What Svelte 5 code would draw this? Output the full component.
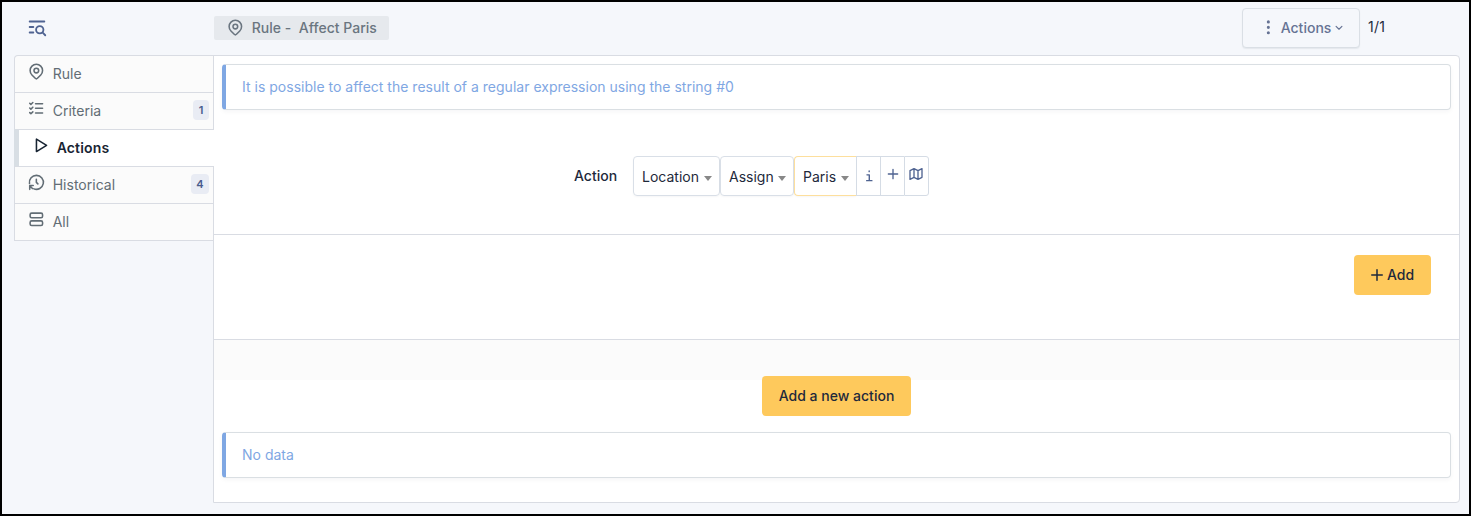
<script>
  const tabs = [
    { label: 'Rule', icon: 'pin' },
    { label: 'Criteria', icon: 'checks', count: 1 },
    { label: 'Actions', icon: 'play', active: true },
    { label: 'Historical', icon: 'history', count: 4 },
    { label: 'All', icon: 'rows' }
  ];
  const selects = [
    { label: 'Location', width: 87 },
    { label: 'Assign', width: 74 },
    { label: 'Paris', width: 62, required: true }
  ];
</script>

{#snippet icon(name, size)}
  <svg class="icon" width={size} height={size} viewBox="0 0 24 24">
    {#if name === 'pin'}
      <circle cx="12" cy="11" r="3" />
      <path d="M17.657 16.657L13.414 20.9a2 2 0 0 1-2.827 0l-4.244-4.243a8 8 0 1 1 11.314 0z" />
    {:else if name === 'checks'}
      <path d="M3.5 5.5L5 7l2.500-2.500M3.500 11.500L5 13l2.500-2.500M3.500 17.500L5 19l2.500-2.500M11 6h9M11 12h9M11 18h9" />
    {:else if name === 'play'}
      <path d="M7 4v16l13-8z" />
    {:else if name === 'history'}
      <path d="M12 8v4l2 2" />
      <path d="M3.200 13.500a9 9 0 1 1 5.600 6.900M8 16H3.500v5M3.500 16.500L7 20" />
    {:else if name === 'rows'}
      <rect x="4" y="4" width="16" height="6" rx="2" />
      <rect x="4" y="14" width="16" height="6" rx="2" />
    {:else if name === 'search'}
      <circle cx="15" cy="15" r="4" />
      <path d="M18.500 18.500L21 21M4 6h16M4 12h4M4 18h4" />
    {:else if name === 'dots'}
      <circle cx="12" cy="5" r="1" />
      <circle cx="12" cy="12" r="1" />
      <circle cx="12" cy="19" r="1" />
    {:else if name === 'chevron'}
      <path d="M5 8l7 7 7-7" stroke-width="2.800" />
    {:else if name === 'plus'}
      <path d="M12 5v14M5 12h14" />
    {:else if name === 'map'}
      <path d="M3 7l6-3 6 3 6-3v13l-6 3-6-3-6 3zM9 4v13M15 7v13" />
    {:else if name === 'info'}
      <path d="M8.500 10h4v10M8 20h9M12.300 3.500v1" stroke-width="2.400" />
    {/if}
  </svg>
{/snippet}

<div class="page">
  <header>
    <span class="filter">{@render icon('search', 22)}</span>
    <h1>{@render icon('pin', 18.7)}<span>Rule -&nbsp; Affect Paris</span></h1>
    <button class="menu">
      {@render icon('dots', 18.7)}<span>Actions</span>{@render icon('chevron', 10)}
    </button>
    <span class="pager">1/1</span>
  </header>

  <main>
    <nav>
      {#each tabs as tab}
        <a class:active={tab.active}>
          {@render icon(tab.icon, 18.7)}
          <span class="label">{tab.label}</span>
          {#if tab.count}<span class="badge">{tab.count}</span>{/if}
        </a>
      {/each}
    </nav>

    <section>
      <div class="alert">It is possible to affect the result of a regular expression using the string #0</div>
      <div class="fields">
        <span class="name">Action</span>
        {#each selects as s}
          <div class="select" class:required={s.required} style="width: {s.width}px">
            <span>{s.label}</span><i></i>
          </div>
        {/each}
        <div class="tool info">{@render icon('info', 14)}</div>
        <div class="tool">{@render icon('plus', 16)}</div>
        <div class="tool">{@render icon('map', 16)}</div>
      </div>
      <div class="submit">
        <button class="primary add">{@render icon('plus', 18)}<span>Add</span></button>
      </div>
      <div class="band"></div>
      <button class="primary new">Add a new action</button>
      <div class="alert">No data</div>
    </section>
  </main>
</div>

<style>
  .page {
    box-sizing: border-box;
    width: 1471px;
    height: 516px;
    border: 2px solid #000;
    background: #f5f7fb;
    font: 14px/20px Inter, sans-serif;
    letter-spacing: 0.01px;
    color: #1e293b;
    overflow: hidden;
  }
  .page :is(div, section, nav, a, button, h1, header, main) { box-sizing: border-box; }
  .icon {
    display: block;
    flex: none;
    fill: none;
    stroke: currentColor;
    stroke-width: 2;
    stroke-linecap: round;
    stroke-linejoin: round;
  }
  header { display: flex; height: 53px; padding-left: 23.5px; }
  .filter { width: 188.5px; padding-top: 14px; color: #4f6391; }
  h1 {
    display: flex;
    align-items: center;
    gap: 7px;
    width: 175px;
    height: 24px;
    margin: 14px 0 0;
    padding-left: 12px;
    border-radius: 2px;
    background: #e6e9ed;
    color: #6a7580;
    font: 500 14px/20px Inter, sans-serif;
    letter-spacing: 0.02px;
  }
  h1 .icon { margin-top: -2px; }
  button { font: 500 14px/20px Inter, sans-serif; letter-spacing: 0.01px; border-radius: 4px; }
  .menu {
    display: flex;
    align-items: center;
    width: 118px;
    height: 40px;
    margin: 6px 0 0 auto;
    padding: 0 0 1px 16px;
    border: 1px solid #dadfe5;
    background: #f5f7fb;
    box-shadow: 0 1px 1px #dadfe599;
    color: #667394;
  }
  .menu span { margin: 0 3px 0 3px; }
  .menu .icon:first-child { margin-top: -1px; }
  .pager { width: 101px; padding: 15px 0 0 8px; letter-spacing: 0.2px; }
  main { display: flex; padding: 0 9px 0 12px; }
  nav {
    position: relative;
    z-index: 1;
    width: 200px;
    height: 186px;
    margin-right: -1px;
    border-bottom: 1px solid #d9dce3;
  }
  nav a {
    display: flex;
    align-items: center;
    height: 37px;
    padding: 0 4px 1px 12px;
    border: solid #d9dce3;
    border-width: 1px 1px 0;
    background: #fbfbfb;
    color: #626d75;
  }
  nav a:first-child { border-top-left-radius: 4px; }
  nav .icon { margin-top: -4px; }
  .label { margin-left: 7px; }
  nav a.active {
    border-left: 5px solid #d8dee4;
    border-right: 0;
    background: #fff;
    color: #182433;
    font-weight: 600;
    letter-spacing: 0.15px;
  }
  .badge {
    margin-left: auto;
    margin-top: -1px;
    padding: 0 5.5px;
    border-radius: 4px;
    background: #e9ecf4;
    color: #4a5c8c;
    font-size: 11px;
    font-weight: 600;
  }
  section {
    width: 1247px;
    height: 448px;
    padding-top: 8px;
    border: 1px solid #d9dce3;
    border-radius: 0 4px 4px 0;
    background: #fff;
  }
  .alert {
    height: 46px;
    margin: 0 8px;
    padding: 12px 16px;
    border: 1px solid #dadfe3;
    border-left: 4px solid #7fa7e3;
    border-radius: 4px;
    box-shadow: 0 2px 4px #1824330a;
    color: #7fa7e3;
  }
  .fields {
    display: flex;
    height: 125px;
    padding: 46px 0 0 360px;
    border-bottom: 1px solid #d9dce3;
  }
  .name { width: 59px; padding-top: 10px; font-weight: 500; }
  .select {
    display: flex;
    justify-content: space-between;
    align-items: center;
    height: 40px;
    padding: 2px 7px 0 8px;
    border: 1px solid #d9dfe7;
    border-radius: 4px;
    box-shadow: 0 1px 2px #1824330a;
  }
  .select.required { border-color: #fddf9d; border-right: 0; border-radius: 4px 0 0 4px; }
  .select i { margin-top: 2px; border: solid transparent; border-width: 5px 4px 0; border-top-color: #888; }
  .tool {
    display: flex;
    justify-content: center;
    width: 24px;
    height: 40px;
    padding: 9px 0 0 0;
    border: 1px solid #d5dce5;
    border-right: 0;
    color: #4f6391;
  }
  .info { padding-top: 12px; }
  .tool:last-child { width: 25px; padding-right: 1px; border-right: 1px solid #d5dce5; border-radius: 0 3px 3px 0; }
  .submit { display: flex; height: 105px; padding: 20px 28px 0; border-bottom: 1px solid #d9dce3; }
  .primary { display: block; height: 40px; padding: 0; border: 0; background: #fec95c; color: #1e293b; }
  .add { display: flex; align-items: center; width: 77px; margin-left: auto; padding-left: 14px; gap: 1px; }
  .band { height: 40px; background: #fbfbfb; }
  .new { position: relative; width: 149px; margin: -4px 0 16px 548px; }
</style>
